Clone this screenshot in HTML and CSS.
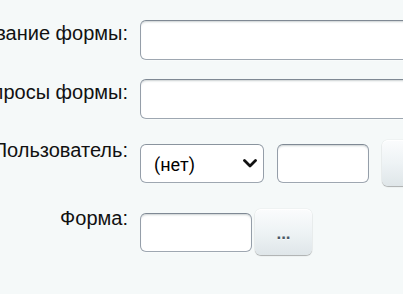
FILE: index.html
```html
<!DOCTYPE html>
<html lang="ru">
<head>
<meta charset="utf-8">
<link rel="stylesheet" href="styles.css">
</head>
<body>
<div class="form">
  <div class="row row-first">
    <div class="label"><span>Название формы:</span></div>
    <div class="field"><input class="input input-wide" type="text"></div>
  </div>
  <div class="row row-second">
    <div class="label"><span>Вопросы формы:</span></div>
    <div class="field"><input class="input input-wide" type="text"></div>
  </div>
  <div class="row row-user">
    <div class="label label-user"><span>Пользователь:</span></div>
    <div class="field field-user">
      <div class="select">
        <span class="select-text">(нет)</span>
        <svg class="chevron" width="14" height="9" viewBox="0 0 14 9"><path d="M1.5 1.5 L7 7 L12.5 1.5" fill="none" stroke="#111" stroke-width="2.8" stroke-linecap="round" stroke-linejoin="round"/></svg>
      </div>
      <input class="input input-id" type="text">
      <button class="btn" type="button">...</button>
    </div>
  </div>
  <div class="row row-form">
    <div class="label label-form"><span>Форма:</span></div>
    <div class="field field-form">
      <input class="input input-short" type="text">
      <button class="btn" type="button">...</button>
    </div>
  </div>
</div>
</body>
</html>
```

FILE: styles.css
```css
html, body {
  margin: 0;
  padding: 0;
  background: #f5f9f9;
  overflow: hidden;
}

body {
  width: 403px;
  height: 294px;
  font-family: "Liberation Sans", Arial, sans-serif;
  color: #000;
}

.form {
  display: flex;
  flex-direction: column;
  padding-top: 20px;
}

.row {
  display: flex;
  align-items: flex-start;
}

.row-second { margin-top: 19px; }
.row-user { margin-top: 21px; }
.row-form { margin-top: 23px; }

.label {
  width: 128px;
  flex: none;
  display: flex;
  justify-content: flex-end;
  padding-right: 12px;
  padding-top: 2px;
  font-size: 20px;
  line-height: 23px;
  white-space: nowrap;
  color: #111;
}

.label-user { padding-top: 0; margin-top: -1px; }
.label-form { padding-top: 0; margin-top: -2px; }

.field {
  flex: 1;
  display: flex;
  align-items: center;
  min-width: 0;
}

.input {
  box-sizing: border-box;
  height: 40px;
  margin: 0;
  padding: 0 8px;
  background: #fff;
  border: 1px solid;
  border-color: #7f8994 #959ea9 #9ea7b1 #959ea9;
  border-radius: 6px;
  box-shadow: inset 0 2px 2px -1px rgba(180, 188, 191, 0.7), 0 1px 0 0 rgba(255, 255, 255, 0.3);
  outline: none;
  font-family: "Liberation Sans", Arial, sans-serif;
  font-size: 17px;
}

.input-wide {
  width: 300px;
  flex: none;
}

.field-user {
  gap: 13px;
}

.select {
  box-sizing: border-box;
  width: 124px;
  height: 39px;
  flex: none;
  display: flex;
  align-items: center;
  justify-content: space-between;
  padding: 0 6px 0 13px;
  background: #fff;
  border: 1px solid;
  border-color: #8a949e #959ea9 #9ea7b1 #959ea9;
  border-radius: 6px;
  font-family: Roboto, "Liberation Sans", sans-serif;
  font-size: 18px;
  color: #000;
}

.select-text {
  padding-top: 3px;
}

.chevron {
  display: block;
  margin-top: 1px;
}

.input-id {
  width: 92px;
  height: 39px;
  flex: none;
}

.field-form {
  gap: 3px;
}

.input-short {
  width: 112px;
  height: 39px;
  flex: none;
}

.btn {
  box-sizing: border-box;
  width: 57px;
  height: 46px;
  flex: none;
  margin: 0;
  padding: 4px 0 0;
  border: none;
  border-radius: 6px;
  background: linear-gradient(to bottom, #fbfcfd 0%, #eef3f5 50%, #dfe6e9 100%);
  box-shadow: 0 0 1px rgba(0, 0, 0, 0.25), 0 1px 1px rgba(0, 0, 0, 0.28), inset 0 1px #fff;
  font-family: "Liberation Sans", Arial, sans-serif;
  font-size: 17px;
  font-weight: bold;
  color: #4a5866;
  text-shadow: 0 1px rgba(255, 255, 255, 0.7);
  letter-spacing: 0;
}
```
